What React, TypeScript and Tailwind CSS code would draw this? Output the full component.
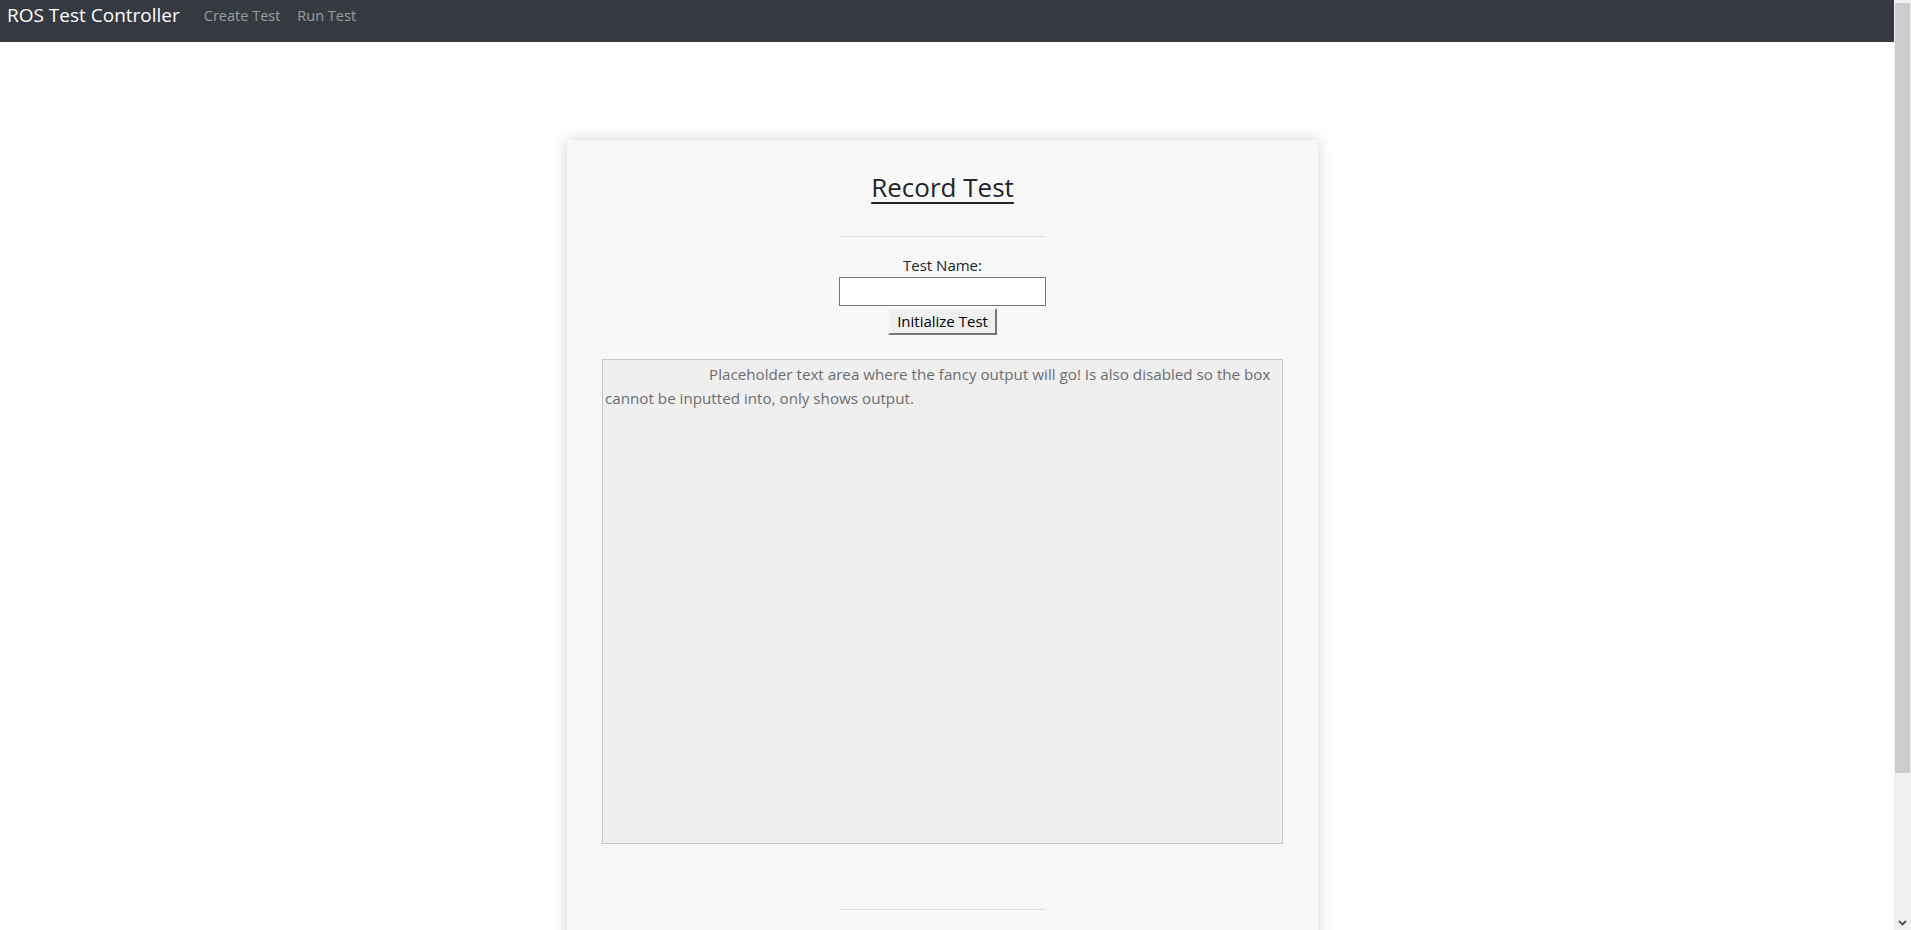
import React, { useState } from 'react';

/**
 * Record Test page: top navbar plus a centered card with the test name form
 * and a read-only output box.
 */
export default function App() {
  // Name typed into the test name field
  const [testName, setTestName] = useState('');

  const font = { fontFamily: '"Open Sans", "Noto Sans", Arial, sans-serif' };

  return (
    <div className="min-h-screen bg-white pr-[17px] text-[#212529]" style={font}>
      {/* Navbar */}
      <nav className="flex h-[42px] items-start bg-[#343a40] pl-[7px]">
        <span className="text-[19px] leading-[30px] text-white">ROS Test Controller</span>
        <a href="#" className="ml-[24px] text-[14.5px] leading-[32px] text-white/50">
          Create Test
        </a>
        <a href="#" className="ml-[17px] text-[14.5px] leading-[32px] text-white/50">
          Run Test
        </a>
      </nav>

      {/* Card */}
      <main className="flex justify-center pt-[98px] pb-[36px] pr-[9px]">
        <div className="flex w-[751px] flex-col items-center bg-[#f8f8f8] px-[35px] pt-[30px] pb-[150px] shadow-[0_0_14px_rgba(0,0,0,0.18)]">
          <h1 className="text-[26px] leading-[34px] underline decoration-[2px] underline-offset-[5px]">
            Record Test
          </h1>
          <hr className="mt-[32px] w-[207px] border-t border-[#dedede]" />

          <label htmlFor="testName" className="mt-[16px] text-[15px] leading-[24px]">
            Test Name:
          </label>
          <input
            id="testName"
            type="text"
            value={testName}
            onChange={e => setTestName(e.target.value)}
            className="h-[29px] w-[207px] border border-[#767676] bg-white px-[2px] text-[15px] outline-none"
          />
          <button
            type="button"
            className="mt-[2px] h-[27px] w-[109px] border-2 border-t-[#f4f4f4] border-l-[#f4f4f4] border-r-[#767676] border-b-[#767676] bg-[#efefef] pb-[2px] text-[15px] leading-[18px] text-black"
          >
            Initialize Test
          </button>

          <textarea
            disabled
            defaultValue="Placeholder text area where the fancy output will go! Is also disabled so the box cannot be inputted into, only shows output."
            className="mt-[24px] h-[485px] w-[681px] resize-none border border-[#c6c6c6] bg-[#efefef] p-[2px] indent-[104px] text-[15.2px] leading-[24px] text-[#6d6d6d]"
          />

          <hr className="mt-[65px] w-[207px] border-t border-[#dedede]" />
        </div>
      </main>

      {/* Browser scrollbar as seen in the screenshot */}
      <div className="fixed top-0 right-0 flex h-screen w-[17px] flex-col bg-[#f0f0f0] pt-[3px]">
        <div className="mx-[1px] h-[770px] bg-[#cdcdcd]" />
        <div className="flex flex-1 items-end justify-center pb-[4px]">
          <svg width="9" height="6" viewBox="0 0 9 6">
            <path d="M1 1 L4.5 4.5 L8 1" stroke="#505050" strokeWidth="1.8" fill="none" />
          </svg>
        </div>
      </div>
    </div>
  );
}
